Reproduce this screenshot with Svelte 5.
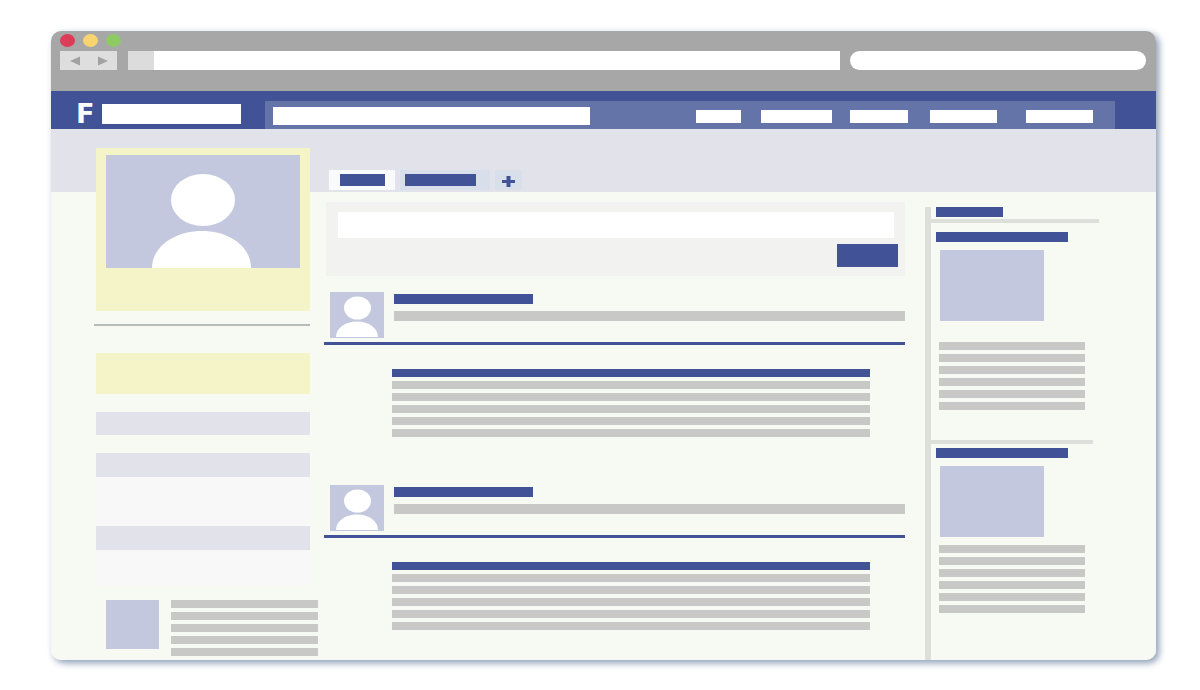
<script>
  const menu = [
    { name: 'Home', width: 45 },
    { name: 'Profile', width: 71 },
    { name: 'Friends', width: 58 },
    { name: 'Inbox', width: 67 },
    { name: 'Settings', width: 67 }
  ];
  const posts = [1, 2];
  const ads = ['first', 'second'];
</script>

{#snippet lines(count)}
  {#each Array(count) as _}
    <span class="line"></span>
  {/each}
{/snippet}

<div class="window">
  <header class="chrome">
    <div class="dots"><i class="red"></i><i class="yellow"></i><i class="green"></i></div>
    <div class="toolbar">
      <div class="history">
        <button aria-label="Back"><svg viewBox="0 0 10 10"><path d="M10 0.500V9.500L0 5Z" /></svg></button>
        <button aria-label="Forward"><svg viewBox="0 0 10 10"><path d="M0 0.500V9.500L10 5Z" /></svg></button>
      </div>
      <div class="address"><span></span><input aria-label="Address" /></div>
      <input class="web-search" aria-label="Web search" />
    </div>
  </header>

  <div class="topbar">
    <a class="logo" href="#home" aria-label="F home">F<span></span></a>
    <div class="band">
      <input aria-label="Search" />
      <nav>
        {#each menu as item}
          <a href="#menu" aria-label={item.name} style:width="{item.width}px"></a>
        {/each}
      </nav>
    </div>
  </div>

  <main>
    <section class="sidebar">
      <div class="card">
        <svg class="portrait" viewBox="0 0 194 113" preserveAspectRatio="xMidYMax slice">
          <rect width="194" height="113" fill="#c3c8de" />
          <ellipse cx="97" cy="45" rx="32" ry="26" fill="#fff" />
          <path d="M46 113C46 92 68 76 96 76S145 92 145 113Z" fill="#fff" />
        </svg>
      </div>
      <hr />
      <div class="notice"></div>
      <div class="panel"></div>
      <div class="panel body-tall"></div>
      <div class="panel body-short"></div>
      <div class="contact">
        <div class="thumb"></div>
        <div class="lines">{@render lines(5)}</div>
      </div>
    </section>

    <section class="feed">
      <div class="tabs">
        <button class="tab active" aria-label="Wall"><span></span></button>
        <button class="tab wide" aria-label="Information"><span></span></button>
        <button class="tab add" aria-label="Add tab">
          <svg viewBox="0 0 13 11"><path d="M4.500 0H8.500V4H13V7H8.500V11H4.500V7H0V4H4.500Z" /></svg>
        </button>
      </div>
      <form class="composer">
        <input aria-label="Write a post" />
        <button type="button" aria-label="Share"></button>
      </form>
      {#each posts as post (post)}
        <article>
          <div class="author">
            <svg class="avatar" viewBox="0 0 54 46">
              <rect width="54" height="46" fill="#c3c8de" />
              <ellipse cx="27.500" cy="16" rx="13.500" ry="11.500" fill="#fff" />
              <path d="M6 45C6 36 15 29.500 27 29.500S48 36 48 45Z" fill="#fff" />
            </svg>
            <div class="byline"><span class="name"></span><span class="meta"></span></div>
          </div>
          <div class="lines text"><span class="line title"></span>{@render lines(5)}</div>
        </article>
      {/each}
    </section>

    <aside>
      <div class="label"></div>
      {#each ads as ad (ad)}
        <div class="ad {ad}">
          <div class="heading"></div>
          <div class="picture"></div>
          <div class="lines">{@render lines(6)}</div>
        </div>
      {/each}
    </aside>
  </main>
</div>

<style>
  :global(body) {
    background: #fff;
    font-family: 'DejaVu Sans', sans-serif;
  }
  .window, .window * { box-sizing: border-box; }
  button, input { display: block; border: 0; padding: 0; margin: 0; border-radius: 0; min-width: 0; outline: 0; }
  input { background: #fff; }

  .window {
    margin: 31px 44px 30px 51px;
    border-radius: 10px;
    overflow: hidden;
    background: #f7f9f3;
    box-shadow: 3px 3px 7px #8c9db6;
  }

  .chrome { height: 60px; background: #a7a7a7; padding: 3px 10px 0 9px; }
  .dots { display: flex; gap: 8px; height: 17px; }
  .dots i { width: 15px; height: 13px; border-radius: 50%; }
  .red { background: #dc3c57; }
  .yellow { background: #f8d470; }
  .green { background: #8dcb62; }
  .toolbar { display: flex; height: 19px; }
  .history {
    display: flex;
    justify-content: space-between;
    width: 57px;
    padding: 0 9px 0 10px;
    margin-right: 11px;
    background: #dedede;
  }
  .history button { background: none; width: 10px; }
  .history svg { display: block; width: 10px; height: 10px; fill: #a2a2a2; }
  .address { display: flex; flex: 712 1 0; margin-right: 10px; }
  .address span { width: 26px; background: #dcdcdc; }
  .address input { flex: 1; }
  .web-search { flex: 296 1 0; border-radius: 10px; }

  .topbar { display: flex; height: 38px; padding: 10px 41px 0 25px; background: #415296; }
  .logo {
    display: flex;
    align-items: center;
    justify-content: space-between;
    width: 165px;
    height: 25px;
    margin-right: 24px;
    color: #fff;
    font-size: 27px;
    font-weight: 700;
    line-height: 24px;
    text-decoration: none;
  }
  .logo span { width: 139px; height: 20px; background: #fff; }
  .band {
    display: flex;
    flex: 1;
    justify-content: space-between;
    padding: 6px 22px 0 8px;
    background: #6574a8;
  }
  .band input { flex: 0 1 317px; height: 18px; }
  nav { display: grid; grid-template-columns: 65px 89px 80px 96px 67px; padding-top: 3px; }
  nav a { height: 13px; background: #fff; }

  main {
    display: grid;
    grid-template-columns: 224px 1fr 174px;
    padding: 0 57px 0 43px;
    background: linear-gradient(#e2e2ea 63px, #f7f9f3 63px);
  }

  .sidebar { padding-top: 19px; }
  .card, .notice, .panel { width: 214px; margin-left: 2px; }
  .card { padding: 7px 10px 43px; background: #f5f3c8; }
  .portrait { display: block; width: 100%; height: 113px; }
  hr { width: 216px; height: 2px; margin: 13px 0 27px; border: 0; background: #b5bbb7; }
  .notice { height: 41px; background: #f5f3c8; }
  .panel { height: 23px; margin-top: 18px; background: #e2e2ea; }
  .body-tall { height: 73px; background: linear-gradient(#e2e2ea 24px, #f8f8f8 24px); }
  .body-short { height: 60px; margin-top: 0; background: linear-gradient(#e2e2ea 24px, #f8f8f9 24px); }
  .contact { display: flex; gap: 12px; padding: 14px 0 4px 12px; }
  .thumb { width: 53px; height: 49px; background: #c3c8de; }
  .contact .lines { flex: 1; }
  .lines { display: flex; flex-direction: column; gap: 4px; }
  .line { height: 8px; background: #c8c9c6; }

  .feed { margin: 0 20px 0 6px; padding-top: 41px; }
  .tabs { display: flex; gap: 5px; height: 20px; padding-left: 5px; }
  .tab { display: flex; align-items: center; padding: 0 0 0 5px; background: #d9dfea; }
  .tab span { height: 12px; background: #415296; }
  .active { width: 66px; padding-left: 11px; background: #f9fafc; }
  .active span { width: 45px; }
  .wide { width: 90px; }
  .wide span { width: 71px; }
  .add { width: 27px; justify-content: center; padding: 2px 0 0; }
  .add svg { width: 13px; height: 11px; fill: #415296; }
  .composer {
    display: flex;
    flex-direction: column;
    gap: 6px;
    height: 74px;
    margin: 12px 0 16px 2px;
    padding: 10px 7px 0 12px;
    background: #f2f2f1;
  }
  .composer input { height: 26px; margin-right: 4px; }
  .composer button { align-self: flex-end; width: 61px; height: 23px; background: #415296; }
  article { height: 193px; }
  article:last-child { height: auto; }
  .author { display: flex; gap: 10px; height: 53px; padding-left: 6px; border-bottom: 3px solid #415296; }
  .avatar { width: 54px; height: 46px; }
  .byline { flex: 1; padding-top: 2px; }
  .name, .meta { display: block; height: 10px; }
  .name { width: 139px; margin-bottom: 7px; background: #415296; }
  .meta { background: #c8c9c6; }
  .text { margin: 24px 35px 0 68px; }
  .title { background: #415296; }

  aside { margin-top: 78px; border-left: 6px solid #dcdfda; }
  .label { width: 67px; height: 10px; margin: 0 0 2px 5px; background: #415296; }
  .ad { border-top: 4px solid #dcdfda; }
  .heading { width: 132px; height: 10px; margin-left: 5px; background: #415296; }
  .picture { width: 104px; height: 71px; margin: 8px 0 8px 9px; background: #c3c8de; }
  .ad .lines { margin: 0 14px 0 8px; }
  .first { padding: 9px 0 30px; }
  .first .picture { margin-bottom: 21px; }
  .second { margin-right: 6px; padding-top: 4px; }
  .second .lines { margin-right: 8px; }
</style>
